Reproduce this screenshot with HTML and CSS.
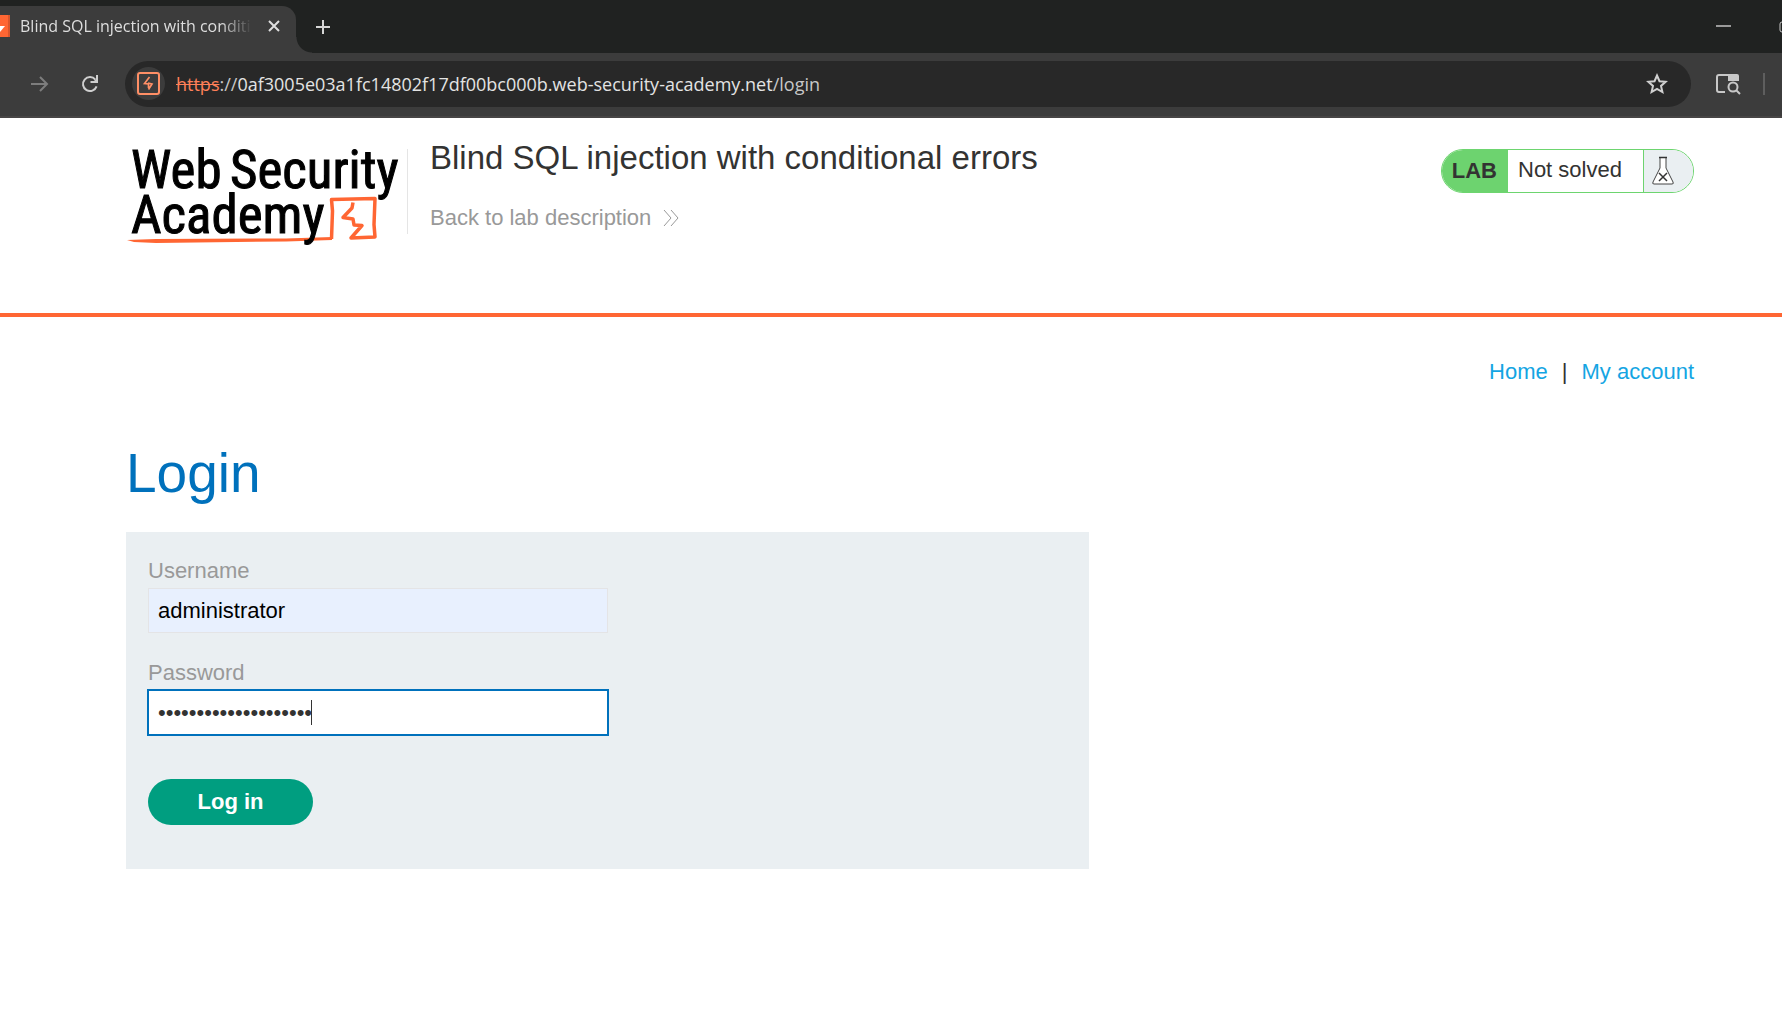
FILE: index.html
```html
<!DOCTYPE html>
<html lang="en">
<head>
<meta charset="utf-8">
<title>Blind SQL injection with conditional errors</title>
<link rel="stylesheet" href="styles.css">
</head>
<body>
<div class="browser">
  <div class="tab-strip">
    <div class="tab">
      <svg class="favicon" width="10" height="22" viewBox="0 0 10 22" aria-hidden="true"><path fill="#ff6633" d="M0 0h10v22H0z"/><path fill="#d9562c" d="M8 0h2v22H8z"/><path fill="#fff" d="M0 11h5L0 17z"/></svg>
      <span class="tab-title">Blind SQL injection with conditi</span>
      <button class="icon-button tab-close" aria-label="Close tab"><svg width="12" height="12" viewBox="0 0 12 12"><path d="M1 1l10 10M11 1L1 11" stroke="#dedede" stroke-width="2" fill="none"/></svg></button>
    </div>
    <button class="icon-button new-tab" aria-label="New tab"><svg width="14" height="14" viewBox="0 0 14 14"><path d="M7 0v14M0 7h14" stroke="#d6d6d6" stroke-width="2" fill="none"/></svg></button>
    <div class="window-controls">
      <button class="icon-button" aria-label="Minimize"><svg width="15" height="12" viewBox="0 0 15 12"><path d="M0 5h15" stroke="#9a9a9a" stroke-width="2"/></svg></button>
      <button class="icon-button" aria-label="Maximize"><svg width="3" height="12" viewBox="0 0 3 12"><rect x="1" y="1" width="10" height="10" rx="2" fill="none" stroke="#c8c8c8" stroke-width="1"/></svg></button>
    </div>
  </div>
  <div class="toolbar">
    <button class="icon-button" aria-label="Forward"><svg width="18" height="18" viewBox="0 0 18 18"><path d="M0 9h16M9 2l7 7-7 7" fill="none" stroke="#7d7d7d" stroke-width="2"/></svg></button>
    <button class="icon-button reload" aria-label="Reload"><svg width="18" height="18" viewBox="0 0 18 18"><path d="M15.6 11.4A7 7 0 1 1 14.4 4.6" fill="none" stroke="#cfcfcf" stroke-width="2"/><path d="M17 0v8H9.500V6h3.500L15 4V0z" fill="#cfcfcf"/></svg></button>
    <div class="omnibox">
      <span class="site-icon"><svg width="23" height="23" viewBox="0 0 23 23" aria-hidden="true"><rect x="1" y="1" width="21" height="21" rx="2" fill="none" stroke="#ff8f66" stroke-width="2"/><path d="M12.500 5L7.500 11.500l4 .5v4M11 11l4 1-3.500 5.500" fill="none" stroke="#ff8f66" stroke-width="1.700"/></svg></span>
      <span class="url"><s class="scheme">https</s><span class="dim">://</span>0af3005e03a1fc14802f17df00bc000b.web-security-academy.net<span class="dim">/login</span></span>
      <button class="icon-button star" aria-label="Bookmark this page"><svg width="22" height="22" viewBox="0 0 22 22"><path d="M11 2.500l2.500 5.700 6.200.6-4.700 4.100 1.400 6.100L11 15.800 5.600 19 7 12.900 2.300 8.800l6.200-.6z" fill="none" stroke="#d0d0d0" stroke-width="2"/></svg></button>
    </div>
    <button class="icon-button" aria-label="Search tabs"><svg width="26" height="22" viewBox="0 0 26 22"><path d="M10 19H4a2 2 0 0 1-2-2V4a2 2 0 0 1 2-2h10" fill="none" stroke="#c8c8c8" stroke-width="2"/><path d="M13 1h9a2 2 0 0 1 2 2v5H13z" fill="#c8c8c8"/><circle cx="18" cy="14" r="4.500" fill="#3c3c3c" stroke="#c8c8c8" stroke-width="2"/><path d="M21 17l4 4" stroke="#c8c8c8" stroke-width="2"/></svg></button>
    <span class="separator"></span>
  </div>
</div>

<header class="lab-header">
  <div class="container lab-bar">
    <a class="logo" href="#" aria-label="Web Security Academy">
      <svg width="281" height="104" viewBox="0 0 281 104">
        <path d="M1 96L30 95 160 94.500 206 93v3L160 97.500 30 99 8 98z" fill="#ff6633"/>
        <path d="M205.500 95l1-28-1-11.500 43.500-1-1 26 1 12.500-24 1 11-12.500-8-.5-1-6-10-1.500 9-9.500 1-5.500" fill="none" stroke="#ff6633" stroke-width="3.500" stroke-linejoin="round"/>
        <text class="logo-text" y="44"><tspan x="5">Web</tspan><tspan x="104">Security</tspan></text>
        <text class="logo-text" x="5" y="89">Academy</text>
      </svg>
    </a>
    <div class="title-block">
      <h2>Blind SQL injection with conditional errors</h2>
      <a class="back-link" href="#">Back to lab description
        <svg width="17" height="18" viewBox="0 0 17 18" aria-hidden="true"><path d="M1 1l7 8-7 8M8 1l7 8-7 8" fill="none" stroke="#999" stroke-width="1"/></svg>
      </a>
    </div>
    <div class="lab-status">
      <span class="lab-tag">LAB</span>
      <span class="lab-state">Not solved</span>
      <span class="lab-flask"><svg width="24" height="30" viewBox="0 0 24 30" aria-hidden="true"><path d="M9 2v10L2 26q-1 2 1 2h18q2 0 1-2L15 12V2" fill="#fff" stroke="#444" stroke-width="1"/><path d="M8 1.500h8" stroke="#333" stroke-width="1.500"/><path d="M8 17l8 8M16 17l-8 8" stroke="#333" stroke-width="1.500"/></svg></span>
    </div>
  </div>
</header>

<main class="container">
  <nav class="top-links"><a href="#">Home</a><span>|</span><a href="#">My account</a></nav>
  <h1>Login</h1>
  <form class="login-form">
    <label for="username">Username</label>
    <input id="username" class="autofilled" type="text" value="administrator">
    <label for="password">Password</label>
    <div class="password-field">
      <input id="password" class="focused" type="password" value="abcdefghijklmnopqrst">
      <span class="caret"></span>
    </div>
    <button class="submit" type="submit">Log in</button>
  </form>
</main>
</body>
</html>
```
FILE: styles.css
```css
* { box-sizing: border-box; }

body {
  margin: 0;
  background: #fff;
  color: #333332;
  font: 22px/30px "Liberation Sans", Arial, sans-serif;
  overflow-x: hidden;
}

a { text-decoration: none; }

/* Browser frame */
.browser { font-family: "Open Sans", "Noto Sans", sans-serif; }

.icon-button {
  display: flex;
  flex: none;
  padding: 0;
  border: 0;
  background: none;
}

.tab-strip {
  display: flex;
  align-items: center;
  height: 53px;
  background: #202221;
}

.tab {
  position: relative;
  display: flex;
  align-items: center;
  align-self: flex-end;
  width: 296px;
  height: 47px;
  padding-bottom: 7px;
  border-radius: 0 14px 0 0;
  background: #3c3c3c;
}

.tab::after {
  content: "";
  position: absolute;
  left: 100%;
  bottom: 0;
  width: 16px;
  height: 16px;
  background: radial-gradient(circle at 100% 0, transparent 15px, #3c3c3c 16px);
}

.tab-title {
  flex: none;
  width: 246px;
  margin: 0 2px 0 10px;
  color: #dedede;
  font-size: 16px;
  line-height: 24px;
  white-space: nowrap;
  -webkit-mask-image: linear-gradient(to right, #000 200px, transparent 232px);
  mask-image: linear-gradient(to right, #000 200px, transparent 232px);
}

.new-tab { margin-left: 20px; }

.window-controls {
  display: flex;
  gap: 48px;
  margin-left: auto;
}

.toolbar {
  display: flex;
  align-items: center;
  height: 65px;
  padding: 0 17px 2px 31px;
  border-bottom: 2px solid #474545;
  background: #3c3c3c;
}

.reload { margin: 0 26px 0 32px; }

.omnibox {
  display: flex;
  flex: 1;
  align-items: center;
  height: 46px;
  margin-right: 24px;
  padding: 0 23px 0 7px;
  border-radius: 23px;
  background: #282828;
}

.site-icon {
  display: flex;
  align-items: center;
  justify-content: center;
  width: 33px;
  height: 33px;
  border-radius: 50%;
  background: #3c3c3c;
}

.url {
  margin-left: 11px;
  color: #e3e3e3;
  font-size: 18px;
  line-height: 26px;
  white-space: nowrap;
}

.scheme { color: #ff8059; }
.dim { color: #c7c7c7; }
.star { margin-left: auto; }

.separator {
  width: 2px;
  height: 22px;
  margin-left: 22px;
  background: #5e5e5e;
}

/* Lab header */
.container { padding: 0 88px 0 126px; }

.lab-header { border-bottom: 4px solid #ff6633; }

.lab-bar {
  display: flex;
  align-items: flex-start;
  height: 195px;
}

.logo {
  display: flex;
  height: 85px;
  margin-top: 31px;
  border-right: 1px solid #e5e5e5;
}

.logo svg { margin-top: -5px; }

.logo-text {
  fill: #000;
  stroke: #000;
  stroke-width: 1px;
  font-family: "Liberation Sans Narrow", "Roboto Condensed", sans-serif;
  font-size: 53px;
}

.title-block { padding: 20px 0 0 22px; }

h2 {
  margin: 0 0 26px;
  font-size: 33px;
  font-weight: 400;
  line-height: 40px;
}

.back-link {
  display: flex;
  align-items: center;
  gap: 12px;
  width: max-content;
  line-height: 28px;
  color: #999;
}

.lab-status {
  display: flex;
  height: 44px;
  margin: 31px 0 0 auto;
  border: 1px solid #6dd56f;
  border-radius: 22px;
  overflow: hidden;
}

.lab-tag {
  padding: 6px 11px 0 10px;
  background: #6dd36f;
  font-weight: 700;
}

.lab-state {
  width: 136px;
  padding: 5px 0 0 10px;
  border-right: 1px solid #6dd36f;
}

.lab-flask {
  width: 49px;
  padding: 6px 0 0 7px;
  background: #eaeff2;
}

/* Login page */
.top-links {
  display: flex;
  justify-content: flex-end;
  gap: 14px;
  padding-top: 40px;
}

.top-links a { color: #14a5e3; }

h1 {
  margin: 54px 0 27px;
  color: #0071bc;
  font-size: 55px;
  font-weight: 400;
  line-height: 64px;
}

.login-form {
  width: 61.4%;
  padding: 22px 20px 44px 22px;
  background: #eaeff2;
}

label {
  display: block;
  height: 34px;
  padding-top: 2px;
  color: #999;
}

input {
  display: block;
  width: 50%;
  height: 45px;
  margin: 0 0 23px;
  padding: 0 9px;
  border: 1px solid #e4e4e6;
  border-radius: 0;
  outline: 0;
  background: #fff;
  color: #333332;
  font: inherit;
}

.autofilled {
  background: #e8f0fe;
  color: #000;
}

.password-field { position: relative; }

.focused {
  border-color: #0071bc;
  box-shadow: 0 0 0 1px #0071bc;
}

.caret {
  position: absolute;
  top: 10px;
  left: 163px;
  width: 1px;
  height: 25px;
  background: #333;
}

.submit {
  display: block;
  width: 165px;
  height: 46px;
  margin-top: 44px;
  border: 0;
  border-radius: 23px;
  background: #009e80;
  color: #fff;
  font: 700 22px/30px "Liberation Sans", Arial, sans-serif;
}
```
